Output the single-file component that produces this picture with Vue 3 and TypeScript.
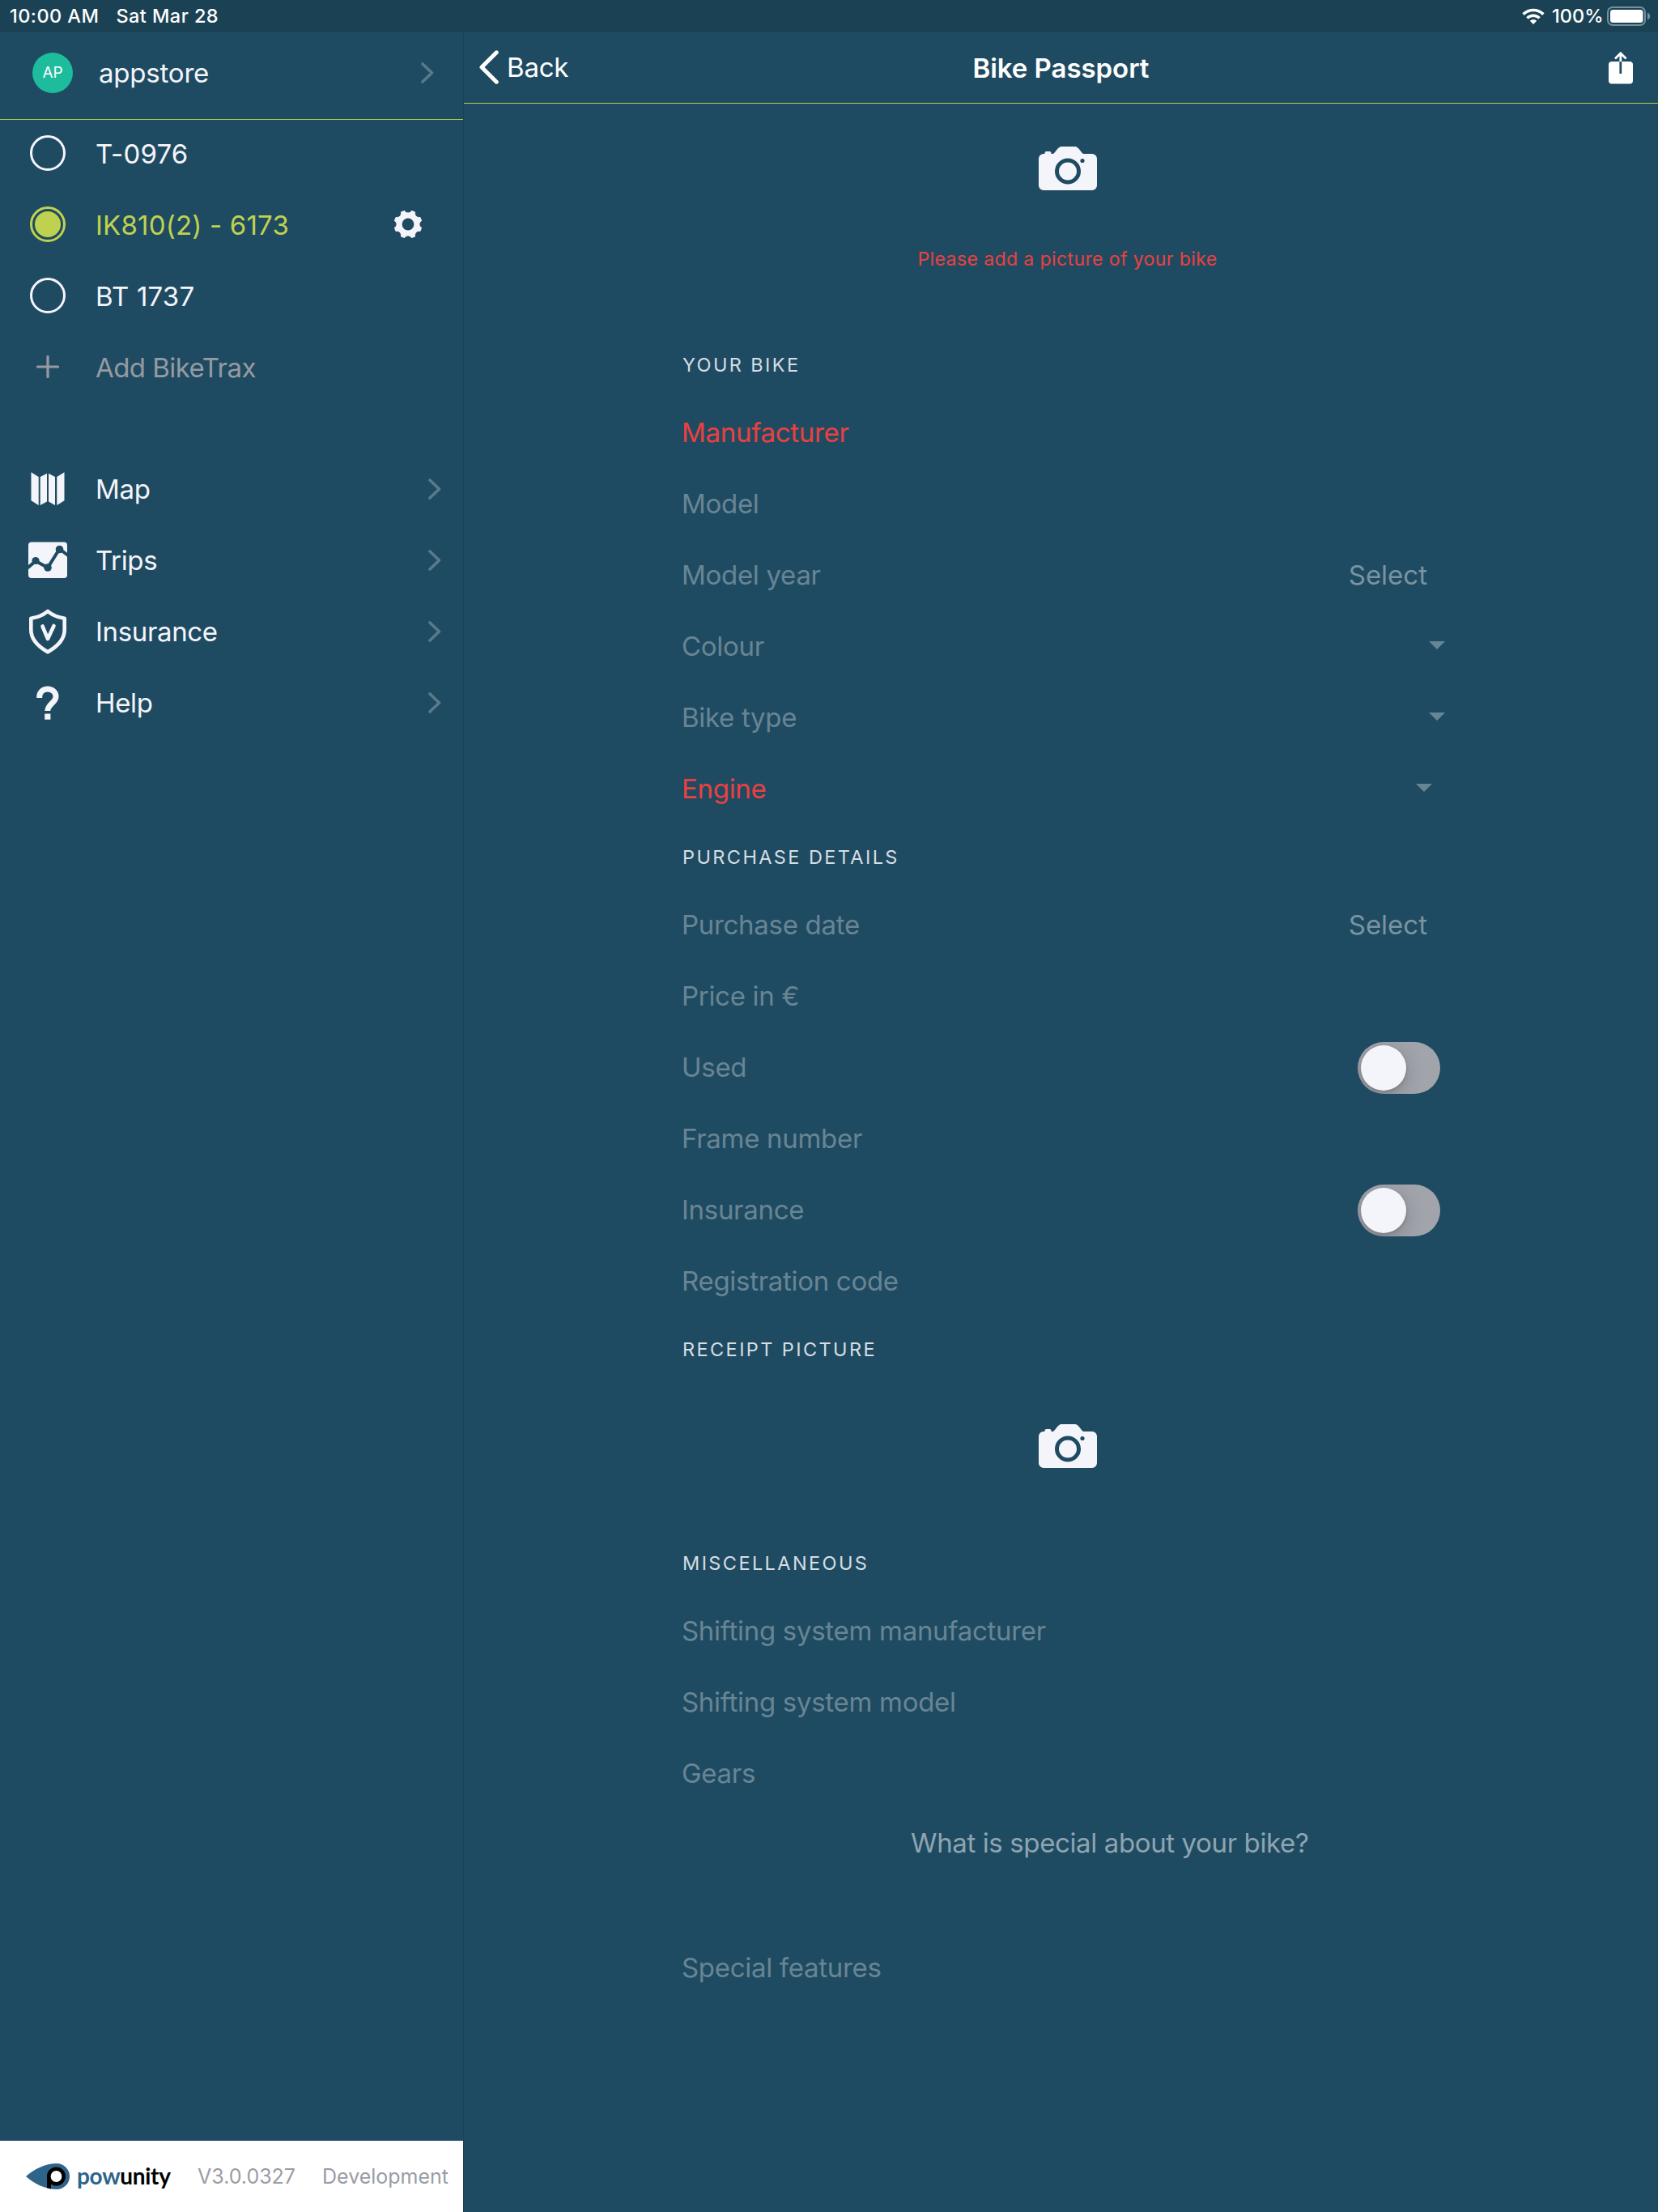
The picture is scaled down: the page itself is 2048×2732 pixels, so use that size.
<script setup lang="ts">
interface Bike { name: string; active?: boolean }
interface Field {
  label: string
  missing?: boolean
  control?: 'select' | 'caret' | 'caret-inset' | 'toggle'
}

const bikes: Bike[] = [
  { name: 'T-0976' },
  { name: 'IK810(2) - 6173', active: true },
  { name: 'BT 1737' },
]

const menu = ['Map', 'Trips', 'Insurance', 'Help']

const bikeFields: Field[] = [
  { label: 'Manufacturer', missing: true },
  { label: 'Model' },
  { label: 'Model year', control: 'select' },
  { label: 'Colour', control: 'caret' },
  { label: 'Bike type', control: 'caret' },
  { label: 'Engine', missing: true, control: 'caret-inset' },
]
const purchaseFields: Field[] = [
  { label: 'Purchase date', control: 'select' },
  { label: 'Price in €' },
  { label: 'Used', control: 'toggle' },
  { label: 'Frame number' },
  { label: 'Insurance', control: 'toggle' },
  { label: 'Registration code' },
]
const miscFields: Field[] = [
  { label: 'Shifting system manufacturer' },
  { label: 'Shifting system model' },
  { label: 'Gears' },
]

const sections = [
  { title: 'Your bike', fields: bikeFields },
  { title: 'Purchase details', fields: purchaseFields },
  { title: 'Receipt picture', fields: [] as Field[], picture: true },
  { title: 'Miscellaneous', fields: miscFields },
]

const notches = [0, 45, 90, 135, 180, 225, 270, 315]
</script>

<template>
  <div class="screen">
    <header class="status">
      <span class="time">10:00 AM</span>
      <span class="date">Sat Mar 28</span>
      <span class="fill"></span>
      <svg class="wifi" width="28" height="20" viewBox="0 0 28 20">
        <path d="M1.6 7.6a17.6 17.6 0 0 1 24.8 0" fill="none" stroke="#fff" stroke-width="3.6" />
        <path d="M6.4 12.4a10.8 10.8 0 0 1 15.2 0" fill="none" stroke="#fff" stroke-width="3.4" />
        <path d="M14 20l-4.2-4.2a6 6 0 0 1 8.4 0z" fill="#fff" />
      </svg>
      <span class="percent">100%</span>
      <svg class="battery" width="54" height="24" viewBox="0 0 54 24">
        <rect x="1" y="1" width="46" height="22" rx="6" fill="none" stroke="#76909c" stroke-width="2" />
        <rect x="4" y="4" width="40.5" height="16" rx="3.5" fill="#fff" />
        <path d="M50 7.500q3.200 1.500 3.200 4.500t-3.200 4.500z" fill="#76909c" />
      </svg>
    </header>

    <div class="body">
      <aside class="side">
        <div class="account">
          <span class="avatar">AP</span>
          <span class="label">appstore</span>
          <svg class="chevron" width="16" height="28" viewBox="0 0 16 28">
            <path d="M2 3l11.500 11L2 25" fill="none" stroke="#587a8a" stroke-width="3.600" stroke-linecap="round" stroke-linejoin="round" />
          </svg>
        </div>

        <ul class="bikes">
          <li v-for="bike in bikes" :key="bike.name" :class="{ active: bike.active }">
            <span class="ico"><span class="radio"></span></span>
            <span class="label">{{ bike.name }}</span>
            <svg v-if="bike.active" class="gear" width="36" height="36" viewBox="-18 -18 36 36">
              <circle r="17.6" fill="#f4f5fa" />
              <circle v-for="a in notches" :key="a" r="4.600" cx="19" cy="0" fill="#1f4b62" :transform="`rotate(${a})`" />
              <circle r="7.400" fill="#1f4b62" />
            </svg>
          </li>
          <li class="add">
            <span class="ico">
              <svg width="28" height="28" viewBox="0 0 28 28">
                <path d="M14 1.500v25M1.500 14h25" stroke="#959aa3" stroke-width="3.200" stroke-linecap="round" />
              </svg>
            </span>
            <span class="label">Add BikeTrax</span>
          </li>
        </ul>

        <ul class="menu">
          <li v-for="item in menu" :key="item">
            <span class="ico">
              <svg v-if="item === 'Map'" width="42" height="42" viewBox="0 0 42 42" fill="#f4f5fa">
                <path d="M.5.3L9.700 5.900V41L.5 35.300z" />
                <path d="M11.700 5.900L20 1.700V36.500l-8.300 4.500z" />
                <path d="M22 1.700l8 4.200V41l-8-4.500z" />
                <path d="M32.300 5.900L41.500.3v35L32.300 41z" />
              </svg>
              <svg v-else-if="item === 'Trips'" width="48" height="46" viewBox="0 0 48 46">
                <rect y=".500" width="48" height="44.500" rx="4" fill="#f4f5fa" />
                <g stroke="#1f4b62" fill="#1f4b62">
                  <path d="M-1 32.500L9 24l15 8L38.500 9 49 17" fill="none" stroke-width="4" />
                  <circle cx="9" cy="23.500" r="4.600" stroke="none" />
                  <circle cx="24" cy="32" r="4.800" stroke="none" />
                  <circle cx="38.500" cy="9.500" r="4.800" stroke="none" />
                </g>
              </svg>
              <svg v-else-if="item === 'Insurance'" width="48" height="56" viewBox="0 0 48 56" fill="none" stroke="#f4f5fa" stroke-width="4.600" stroke-linecap="round" stroke-linejoin="round">
                <path d="M24 3C18 8 12 10.500 3.300 11.800V26C3.300 38 13 47 24 53.200 35 47 44.700 38 44.700 26V11.800C36 10.500 30 8 24 3z" />
                <path d="M17.500 21.500L24 37l7.500-16" />
              </svg>
              <svg v-else width="28" height="42" viewBox="0 0 28 42">
                <path d="M3.700 15V13.700C3.700 8 8 4 13.800 4s10.200 4 10.200 9.200c0 7.800-10.200 9.300-10.200 17.800" fill="none" stroke="#f4f5fa" stroke-width="7" />
                <rect x="10.200" y="34.500" width="7.200" height="7.200" fill="#f4f5fa" />
              </svg>
            </span>
            <span class="label">{{ item }}</span>
            <svg class="chevron" width="16" height="28" viewBox="0 0 16 28">
              <path d="M2 3l11.500 11L2 25" fill="none" stroke="#587a8a" stroke-width="3.600" stroke-linecap="round" stroke-linejoin="round" />
            </svg>
          </li>
        </ul>

        <footer class="foot">
          <svg width="54" height="32" viewBox="0 0 54 32">
            <path d="M0 16C10 7 24 0 38 0a16 16 0 0 1 16 16 16 16 0 0 1-16 16C24 32 10 25 0 16z" fill="#2f648a" />
            <path d="M26 16h5v15.500l-5-1.300z" />
            <circle cx="37.500" cy="16" r="9.200" fill="#fff" stroke="#000" stroke-width="4.600" />
          </svg>
          <span class="brand"><b>pow</b>unity</span>
          <span class="version">V3.0.0327</span>
          <span class="channel">Development</span>
        </footer>
      </aside>

      <main class="main">
        <div class="bar">
          <div class="back">
            <svg width="26" height="42" viewBox="0 0 26 42">
              <path d="M22.300 2.800L4 21l18.300 18.200" fill="none" stroke="#fff" stroke-width="5" stroke-linecap="round" stroke-linejoin="round" />
            </svg>
            <span>Back</span>
          </div>
          <h1>Bike Passport</h1>
          <div class="share">
            <svg width="30" height="40" viewBox="0 0 30 40">
              <rect y="12" width="30" height="27.500" rx="4" fill="#fff" />
              <path d="M14.800 12V27" stroke="#1f4b62" stroke-width="2.800" />
              <path d="M14.800 12V2.500M8 8.500l6.800-6.800 6.800 6.800" fill="none" stroke="#fff" stroke-width="2.800" />
            </svg>
          </div>
        </div>

        <div class="photo">
          <svg width="72" height="54" viewBox="0 0 72 54">
            <path d="M6 9h1.500V8A2 2 0 0 1 9.500 6h4A2 2 0 0 1 15.500 8v1h2.500c3-2 6-9 10-9h17c4 0 7 7 10 9h11a6 6 0 0 1 6 6v33a6 6 0 0 1-6 6H6a6 6 0 0 1-6-6V15a6 6 0 0 1 6-6z" fill="#f4f5fa" />
            <circle cx="36" cy="30.500" r="13.500" fill="none" stroke="#1f4b62" stroke-width="5" />
            <circle cx="54" cy="17.500" r="2.600" fill="#1f4b62" />
          </svg>
          <p>Please add a picture of your bike</p>
        </div>

        <section v-for="s in sections" :key="s.title" class="group">
          <h2>{{ s.title }}</h2>
          <div v-if="s.picture" class="receipt">
            <svg width="72" height="54" viewBox="0 0 72 54">
              <path d="M6 9h1.500V8A2 2 0 0 1 9.500 6h4A2 2 0 0 1 15.500 8v1h2.500c3-2 6-9 10-9h17c4 0 7 7 10 9h11a6 6 0 0 1 6 6v33a6 6 0 0 1-6 6H6a6 6 0 0 1-6-6V15a6 6 0 0 1 6-6z" fill="#f4f5fa" />
              <circle cx="36" cy="30.500" r="13.500" fill="none" stroke="#1f4b62" stroke-width="5" />
              <circle cx="54" cy="17.500" r="2.600" fill="#1f4b62" />
            </svg>
          </div>
          <div v-for="f in s.fields" :key="f.label" class="field" :class="{ missing: f.missing }">
            <span>{{ f.label }}</span>
            <span v-if="f.control === 'select'" class="select">Select</span>
            <span v-else-if="f.control === 'toggle'" class="toggle"><i></i></span>
            <span v-else-if="f.control" class="caret" :class="{ inset: f.control === 'caret-inset' }"></span>
          </div>
        </section>

        <p class="question">What is special about your bike?</p>
        <div class="field"><span>Special features</span></div>
      </main>
    </div>
  </div>
</template>

<style>
body {
  margin: 0;
  background: #1f4b62;
}
</style>

<style scoped>
.screen {
  display: flex;
  flex-direction: column;
  width: 2048px;
  height: 2732px;
  overflow: hidden;
  background: #1f4b62;
  color: #f4f5fa;
  font-family: Inter, "Liberation Sans", sans-serif;
  font-size: 33px;
  line-height: 40px;
  letter-spacing: -0.2px;
  white-space: nowrap;
}
svg { display: block; flex: none; overflow: hidden; }
h1, h2, p, ul { margin: 0; padding: 0; font-weight: 400; }
li { list-style: none; }

.status {
  display: flex;
  align-items: center;
  box-sizing: border-box;
  height: 40px;
  padding: 0 9px 1px 12px;
  background: #1b4254;
  color: #fff;
  font-size: 23.5px;
  font-weight: 500;
  letter-spacing: 0.45px;
}
.date { margin-left: 21px; }
.fill { flex: 1; }
.percent { margin: 0 4.5px 0 9px; letter-spacing: 0; }
.battery { margin-top: 1px; }
.wifi { margin-top: 1px; }

.body { display: flex; flex: 1; min-height: 0; }
.side {
  display: flex;
  flex-direction: column;
  width: 572px;
  border-right: 1px solid #1a4255;
}
.account {
  display: flex;
  align-items: center;
  box-sizing: border-box;
  height: 108px;
  padding: 0 36px 7px 40px;
  border-bottom: 1px solid #b9cc50;
}
.avatar {
  width: 50px;
  height: 50px;
  margin-right: 32px;
  border-radius: 50%;
  background: #1dbc9c;
  color: #fff;
  font-size: 19px;
  line-height: 50px;
  text-align: center;
}
.chevron { margin-left: auto; }

.bikes { margin-top: -2px; letter-spacing: 0.2px; }
.bikes li, .menu li {
  display: flex;
  align-items: center;
  height: 88px;
}
.menu { margin-top: 62px; letter-spacing: -0.35px; }
.menu li { padding-right: 27px; }
.ico {
  display: flex;
  justify-content: center;
  width: 118px;
  margin-top: -1px;
}
.bikes .ico { margin-top: -2px; }
.radio {
  box-sizing: border-box;
  width: 44px;
  height: 44px;
  border: 3px solid #f4f5fa;
  border-radius: 50%;
}
.active { color: #bfd24f; }
.active .radio {
  padding: 3px;
  border-color: #bfd24f;
  background: #bfd24f content-box;
}
.gear { margin: -2px 50.5px 0 auto; }
.bikes .add { color: #959aa3; letter-spacing: -0.55px; }

.foot {
  display: flex;
  align-items: center;
  box-sizing: border-box;
  height: 88px;
  margin-top: auto;
  padding-left: 32px;
  background: #fff;
  color: #9a9ca5;
  font-size: 25px;
  letter-spacing: 0;
}
.brand {
  width: 117px;
  margin: -2px 0 0 9px;
  color: #000;
  font-family: Lato, sans-serif;
  font-size: 28px;
  font-weight: 700;
  letter-spacing: -0.3px;
}
.brand b { color: #2f648a; font-weight: 700; }
.version { width: 154px; margin-left: 32px; }

.main { flex: 1; }
.bar {
  display: grid;
  grid-template-columns: 1fr auto 1fr;
  align-items: center;
  box-sizing: border-box;
  height: 88px;
  border-bottom: 1px solid #b9cc50;
  color: #fff;
}
.back { display: flex; align-items: center; gap: 9px; padding: 0 0 1px 18px; }
.bar h1 { font-size: 33px; font-weight: 600; letter-spacing: -0.05px; }
.share { display: flex; justify-content: flex-end; padding-right: 31px; }

.photo {
  display: flex;
  flex-direction: column;
  align-items: center;
  box-sizing: border-box;
  height: 282px;
  padding: 53px 0 0 16px;
}
.photo p {
  margin-top: 65px;
  color: #eb4040;
  font-size: 23px;
  letter-spacing: 0.4px;
}
.group, .main > .field { padding-left: 269px; }
.group h2 {
  box-sizing: border-box;
  height: 80px;
  padding: 21px 0 0 1px;
  color: #d5dee3;
  font-size: 23.5px;
  letter-spacing: 2.4px;
  text-transform: uppercase;
}
.receipt {
  display: flex;
  justify-content: center;
  box-sizing: border-box;
  height: 184px;
  margin-left: -253px;
  padding-top: 53px;
}
.field {
  display: flex;
  align-items: center;
  justify-content: space-between;
  height: 88px;
  padding-right: 263px;
  color: #688594;
  letter-spacing: -0.3px;
}
.field.missing { color: #eb4040; }
.select { margin-right: 22px; color: #7993a1; letter-spacing: 0; }
.caret {
  margin-bottom: 2px;
  border: 10px solid transparent;
  border-top-color: #688594;
  border-bottom: 0;
}
.inset { margin-right: 16px; }
.toggle {
  box-sizing: border-box;
  width: 102px;
  height: 64px;
  margin: 2px 6px 0 0;
  padding: 4px;
  border-radius: 32px;
  background: #a2a4ac;
  overflow: hidden;
}
.toggle i {
  display: block;
  width: 56px;
  height: 56px;
  border-radius: 50%;
  background: #f4f5fa;
  box-shadow: 0 6px 24px rgba(0, 0, 0, 0.2), 0 2px 4px rgba(0, 0, 0, 0.15);
}
.question {
  height: 40px;
  padding: 22px 0 90px 552px;
  color: #8ea4b0;
  letter-spacing: -0.38px;
}
</style>
